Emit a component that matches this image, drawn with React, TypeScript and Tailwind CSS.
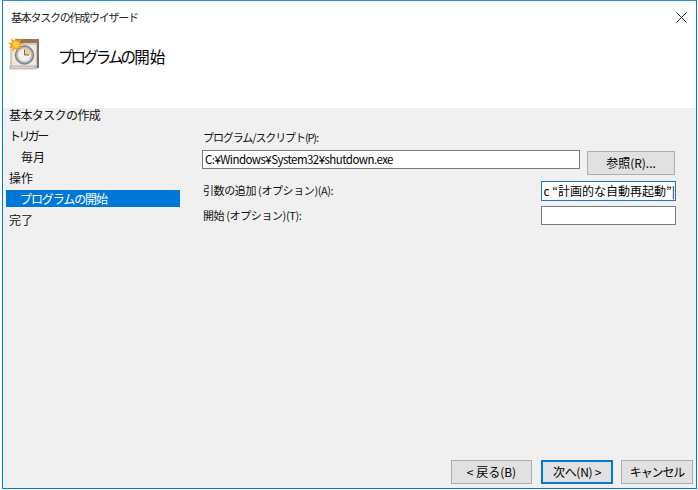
import React from 'react';

const font = "font-['Noto_Sans_CJK_JP','Liberation_Sans',sans-serif]";

const TaskIcon = () => (
  <svg width="33" height="33" viewBox="0 0 33 33" className="shrink-0">
    <rect x="4" y="6" width="26" height="24" fill="#efe9dc" stroke="#a8a39a" />
    <rect x="3" y="28" width="26" height="3" fill="#d6d2c9" stroke="#9a968e" strokeWidth="0.6" />
    <rect x="8" y="1" width="24" height="4" fill="#9c7358" />
    <rect x="30" y="4" width="2" height="26" fill="#77736c" />
    <circle cx="17.5" cy="17" r="9" fill="#b9bcc2" stroke="#7d7f86" strokeWidth="1.4" />
    <circle cx="17.5" cy="17" r="6.5" fill="#f4f1e8" />
    <path d="M17.5 17 V10.5 A6.5 6.5 0 0 1 24 17 Z" fill="#efcf93" />
    <path d="M17.5 11.5 V17 H22" fill="none" stroke="#6a6a6a" strokeWidth="1" />
    <path
      d="M9 -1 L10.4 3 L14 0.8 L12.6 4.6 L17 5.2 L13 7.4 L15.6 10.6 L11.4 9.8 L11 14 L8.4 10.8 L5.4 13.6 L5.8 9.6 L1.6 10 L4.6 7.2 L0.8 5 L5.2 4.4 L3.8 0.6 L7.4 2.8 Z"
      fill="#f7a11b"
    />
    <circle cx="9" cy="6.6" r="3.2" fill="#ffd257" />
  </svg>
);

const navItems = [
  { label: '基本タスクの作成', active: false, pad: 'pl-[3px]', track: 'tracking-[-0.6px]' },
  { label: 'トリガー', active: false, pad: 'pl-[3px]', track: 'tracking-[-2.6px]' },
  { label: '毎月', active: false, pad: 'pl-[15px]', track: '' },
  { label: '操作', active: false, pad: 'pl-[3px]', track: '' },
  { label: 'プログラムの開始', active: true, pad: 'pl-[14px]', track: 'tracking-[-1.1px]' },
  { label: '完了', active: false, pad: 'pl-[3px]', track: '' },
];

const Field = ({ className, value }: { className: string; value?: string }) => (
  <div className={`h-[19px] bg-white border border-[#7a7a7a] overflow-hidden whitespace-nowrap pl-[2px] text-[11.5px] tracking-[-0.55px] leading-[16px] text-black ${className}`}>
    {value}
  </div>
);

const Btn = ({ children, className }: { children: React.ReactNode; className: string }) => (
  <button className={`h-[24px] bg-[#e1e1e1] text-[12px] leading-none text-black ${className}`}>
    {children}
  </button>
);

export default function App() {
  return (
    <div className={`w-[698px] h-[490px] bg-white pl-[2px] pb-px pr-px ${font}`}>
      <div className="h-full flex flex-col border border-[#0078d7] border-t-[#2b8fdc]">
        <div className="h-[107px] bg-white flex flex-col shrink-0">
          <div className="h-[32px] flex items-center justify-between pl-[8px] pr-[8px] shrink-0">
            <span className="text-[11px] tracking-[-1.25px] text-[#222]">基本タスクの作成ウイザード</span>
            <svg width="11" height="11" viewBox="0 0 11 11" className="mr-px">
              <path d="M0.5 0.5 L10.5 10.5 M10.5 0.5 L0.5 10.5" stroke="#222" strokeWidth="1" />
            </svg>
          </div>
          <div className="flex items-start pl-[4px] mt-[5px]">
            <TaskIcon />
            <span className="ml-[18px] mt-[6px] text-[15.5px] leading-[24px] text-black">
              <span className="tracking-[-2.9px]">プログラムの</span>
              <span className="ml-[1px]">開始</span>
            </span>
          </div>
        </div>
        <div className="flex-1 bg-[#f0f0f0] flex flex-col min-h-0">
          <div className="flex flex-1 min-h-0">
            <div className="w-[177px] pl-[3px] -mt-[4px] shrink-0">
              {navItems.map((item) => (
                <div
                  key={item.label + item.pad}
                  className={`${item.active ? 'bg-[#0078d7] text-white h-[17px] my-[2px]' : 'text-[#111] h-[21px]'} ${item.pad} ${item.track} flex items-center text-[12px] leading-none whitespace-nowrap`}
                >
                  {item.label}
                </div>
              ))}
            </div>
            <div className="flex-1 pt-[22px] pl-[22px] pr-[20px] text-[11px] text-[#111]">
              <div className="h-[20px] pl-px leading-[14px] tracking-[-1.1px]">プログラム/スクリプト(P):</div>
              <div className="flex items-start">
                <Field className="w-[378px]" value="C:¥Windows¥System32¥shutdown.exe" />
                <Btn className="ml-[7px] mt-px w-[88px] border border-[#adadad]">参照(R)...</Btn>
              </div>
              <div className="flex items-center justify-between mt-[6px] h-[19px]">
                <span className="pl-px tracking-[-0.4px]">引数の追加 (オプション)(A):</span>
                <div className="w-[135px] h-[20px] bg-white border border-[#1a78c2] overflow-hidden whitespace-nowrap text-[12px] leading-[18px] text-black flex justify-end">
                  c “計画的な自動再起動”|
                </div>
              </div>
              <div className="flex items-center justify-between mt-[6px] h-[19px]">
                <span className="pl-px tracking-[-0.4px]">開始 (オプション)(T):</span>
                <Field className="w-[135px]" />
              </div>
            </div>
          </div>
          <div className="flex justify-end items-center pr-[3px] pb-[4px] shrink-0">
            <Btn className="w-[81px] border border-[#adadad]">&lt; 戻る(B)</Btn>
            <Btn className="ml-[9px] w-[72px] border-2 border-[#0078d7] tracking-[-0.3px]">次へ(N) &gt;</Btn>
            <Btn className="ml-[8px] w-[72px] border border-[#adadad] tracking-[-1.1px]">キャンセル</Btn>
          </div>
        </div>
      </div>
    </div>
  );
}
